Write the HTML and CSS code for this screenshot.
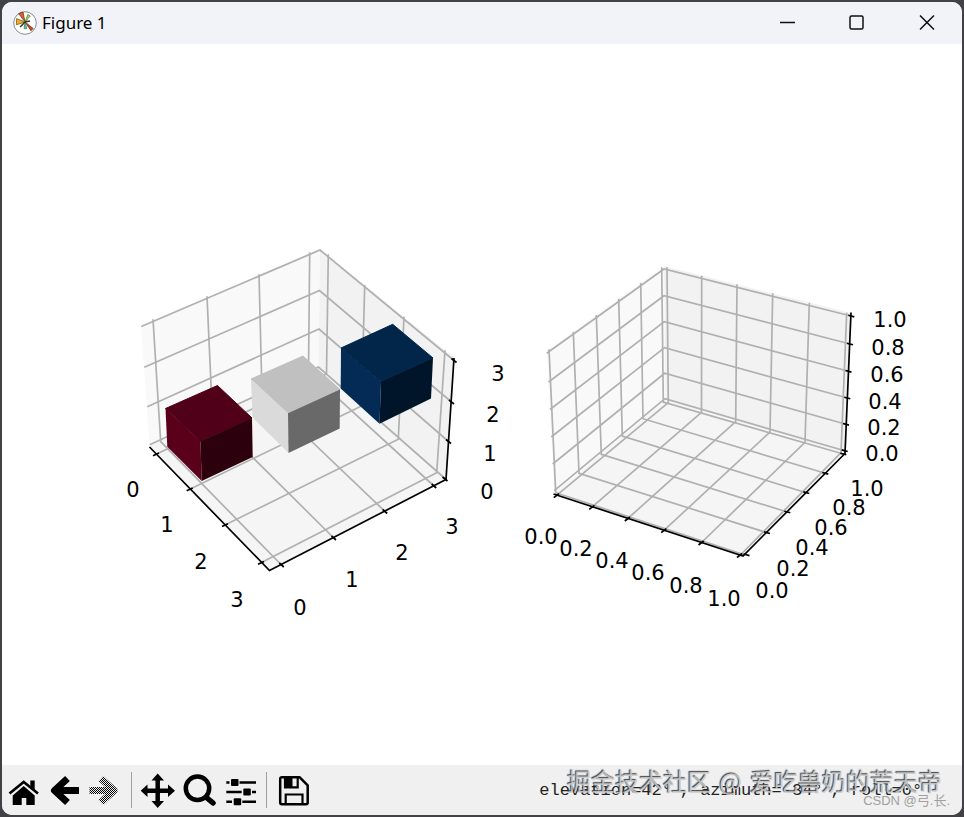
FILE: index.html
```
<!DOCTYPE html>
<html lang="en">
<head>
    <meta charset="UTF-8">
    <meta name="viewport" content="width=device-width, initial-scale=1.0">
    <title>Figure 1</title>
    <link rel="stylesheet" href="styles.css">
</head>
<body>
    <div class="window">
        <header class="titlebar">
            <svg class="app-icon" viewBox="0 0 24 24" aria-hidden="true">
                <circle cx="12" cy="12" r="11.3" fill="#fff" stroke="#8a8a92" stroke-width="1"/>
                <path d="M12 11L5.600 2.600 10 1z" fill="#e0602a" stroke="#5a3014" stroke-width=".7"/>
                <path d="M12 11L3.400 13.800 3.600 7.600z" fill="#f0b020" stroke="#6a4a10" stroke-width=".7"/>
                <path d="M12 11L14.800 3.600 17.200 5z" fill="#a8d860" stroke="#4a7030" stroke-width=".7"/>
                <path d="M12 11L20.200 17.500 18 19.700z" fill="#d8481c" stroke="#5a2010" stroke-width=".7"/>
                <path d="M12 11L13.800 17.500 11 17.700z" fill="#50c8a0" stroke="#308060" stroke-width=".7"/>
                <path d="M12 11L7.200 16M12 11L17 10" stroke="#403020" stroke-width="1.500"/>
            </svg>
            <h1 class="title">Figure 1</h1>
            <div class="window-controls">
                <button aria-label="Minimize"><svg viewBox="0 0 16 16"><path d="M1 7.500H16"/></svg></button>
                <button aria-label="Maximize"><svg viewBox="0 0 16 16"><rect x="1" y="1" width="13" height="13" rx="1.500"/></svg></button>
                <button aria-label="Close"><svg viewBox="0 0 16 16"><path d="M1 .5L15 14.500M15 .5L1 14.500"/></svg></button>
            </div>
        </header>

        <main class="figure">
            <svg class="plots" viewBox="2 44 960 721" role="img" aria-label="Two 3D axes, the first with three voxels">
                <!-- left axes -->
                <g class="axes">
                    <path class="pane-x" d="M141 325L320 249 318.500 367 149.500 446z"/>
                    <path class="pane-y" d="M320 249L454 357.500 445.500 480 318.500 367z"/>
                    <path class="pane-z" d="M149.500 446L318.500 367 445.500 480 269.500 570.500z"/>
                    <g class="grid">
                        <path d="M153 319.300L160.700 441.700 281.500 565"/>
                        <path d="M207 296.300L212.500 417.500 333.800 538"/>
                        <path d="M259 274.300L262 394 385 511.500"/>
                        <path d="M309.700 252.300L308.500 371.500 434 486"/>
                        <path d="M328.300 254.300L326.500 374 156 454.300"/>
                        <path d="M364.700 285L361.500 406 189.700 489.300"/>
                        <path d="M404 316.700L398.300 439.300 225 525"/>
                        <path d="M445 350.300L436.700 472.700 261 562.700"/>
                        <path d="M141.300 326.500L320 250 454 360.500"/>
                        <path d="M144.300 367.300L319.500 290.500 451.500 402"/>
                        <path d="M147.300 406.700L319 329 448.500 441.500"/>
                        <path d="M149.700 444.700L318.500 367 445.500 479"/>
                    </g>
                    <g class="axis">
                        <path d="M149.500 447L269.500 570.500 446 479.500 454 358"/>
                        <path d="M153 455.800L159 453M186.700 490.800L192.700 488M222 526.500L228 523.700M258 564.200L264 561.400"/>
                        <path d="M279.300 563L283.800 567M331.500 536L336 540M382.700 509.500L387.200 513.500M431.700 484L436.200 488"/>
                        <path d="M451.500 358.500L456.500 362.500M449 400L454 404M446 439.500L451 443.500M442.500 477L447.500 481"/>
                    </g>
                    <g class="voxel-red">
                        <path class="top" d="M165.500 408.500L217.500 385.500 252 418 200.500 441.500z"/>
                        <path class="side" d="M165.500 408.500L200.500 441.500 201.700 481 167.300 446.700z"/>
                        <path class="front" d="M200.500 441.500L252 418 252.700 457 201.700 481z"/>
                    </g>
                    <g class="voxel-gray">
                        <path class="top" d="M251 379L303 356 340 389.500 288 413.300z"/>
                        <path class="side" d="M251 379L288 413.300 288.500 453 252.500 417.500z"/>
                        <path class="front" d="M288 413.300L340 389.500 339.700 428.500 288.500 453z"/>
                    </g>
                    <g class="voxel-blue">
                        <path class="top" d="M341 348L392.700 324.300 433 358 381 381.500z"/>
                        <path class="side" d="M341 348L381 381.500 379.500 423.700 340.700 388.500z"/>
                        <path class="front" d="M381 381.500L433 358 431 398.500 379.500 423.700z"/>
                    </g>
                    <g class="ticks">
                        <text x="133" y="497">0</text>
                        <text x="167" y="532">1</text>
                        <text x="201" y="569">2</text>
                        <text x="237" y="607">3</text>
                        <text x="300" y="615">0</text>
                        <text x="352" y="587">1</text>
                        <text x="402" y="560">2</text>
                        <text x="452" y="534">3</text>
                        <text x="487" y="499">0</text>
                        <text x="490" y="461">1</text>
                        <text x="493" y="422">2</text>
                        <text x="498" y="381">3</text>
                    </g>
                </g>

                <!-- right axes -->
                <g class="axes">
                    <path class="pane-x" d="M547 350.500L664 266 665.500 400.500 554 493.500z"/>
                    <path class="pane-y" d="M664 266L851 313 845 453.500 665.500 400.500z"/>
                    <path class="pane-z" d="M554 493.500L665.500 400.500 845 453.500 743 556z"/>
                    <g class="grid">
                        <path d="M549 349.300L555.700 492.700 745 555"/>
                        <path d="M573.300 332L579 473.300 767 532.700"/>
                        <path d="M596.300 315L601.300 454.300 787.300 512"/>
                        <path d="M618.700 298.700L622.300 436 806.300 492.700"/>
                        <path d="M640.700 283L643 418.700 825.300 473.300"/>
                        <path d="M661.700 267.300L663.300 402 843.300 454"/>
                        <path d="M667 267.300L668.300 402.700 556.300 495.700"/>
                        <path d="M701.700 275.700L701.500 412.300 591.700 507.300"/>
                        <path d="M737 284.300L735.700 421.700 627.300 519"/>
                        <path d="M772.700 293.300L770 432 663.700 530.700"/>
                        <path d="M809.300 302.700L805 442.300 701 543"/>
                        <path d="M846.700 312.700L841 452.700 740 555.500"/>
                        <path d="M546.700 353.300L664 269 851 316"/>
                        <path d="M548.500 382L664 295.700 850 344"/>
                        <path d="M550 409.500L664.300 321.700 848.500 371.300"/>
                        <path d="M551.200 437L664.500 347.700 847.300 398"/>
                        <path d="M552.700 464L664.700 373.300 846 424.300"/>
                        <path d="M554.300 490.700L665 398.700 844.700 450.700"/>
                    </g>
                    <g class="axis">
                        <path d="M553.500 494L743 556 845 453.500 851 312.500"/>
                        <path d="M553.800 497.700L559 493.700M589.200 509.300L594.400 505.300M624.800 521L630 517M661.200 532.700L666.400 528.700M698.500 545L703.700 541M737 557.500L742.200 553.500"/>
                        <path d="M743.500 554L749.500 555.600M764 531.900L770 533.500M784.300 511.200L790.300 512.800M803.300 491.900L809.300 493.500M822.300 472.500L828.300 474.100M840.300 453.200L846.300 454.800"/>
                        <path d="M848.300 315.300L854.300 316.900M847 343.200L853 344.800M845.500 370.500L851.500 372.100M844.300 397.200L850.300 398.800M843 423.500L849 425.100M841.700 449.900L847.700 451.500"/>
                    </g>
                    <g class="ticks">
                        <text x="541" y="544">0.0</text>
                        <text x="576" y="556">0.2</text>
                        <text x="612" y="568">0.4</text>
                        <text x="648" y="580">0.6</text>
                        <text x="686" y="593">0.8</text>
                        <text x="724" y="606">1.0</text>
                        <text x="772" y="598">0.0</text>
                        <text x="793" y="576">0.2</text>
                        <text x="812" y="555">0.4</text>
                        <text x="831" y="535">0.6</text>
                        <text x="849" y="515">0.8</text>
                        <text x="867" y="496">1.0</text>
                        <text x="882" y="461">0.0</text>
                        <text x="884" y="435">0.2</text>
                        <text x="885" y="409">0.4</text>
                        <text x="887" y="382">0.6</text>
                        <text x="888" y="355">0.8</text>
                        <text x="890" y="327">1.0</text>
                    </g>
                </g>
            </svg>
        </main>

        <footer class="toolbar">
            <button class="tool" aria-label="Home">
                <svg viewBox="0 0 40 40">
                    <path d="M26.300 10.500H30.700V20L26.300 16z"/>
                    <path d="M8.700 25.500L19.700 16 30.700 25.500V35H22.300V28H17.700V35H8.700z"/>
                    <path class="line" stroke-width="2.600" d="M5.500 23.500L19.700 12 34 23.500"/>
                </svg>
            </button>
            <button class="tool" aria-label="Back">
                <svg viewBox="0 0 40 40">
                    <path class="line" stroke-width="7" stroke-linejoin="round" d="M23.500 8.500L10.500 20.500 23.500 32.500M11 20.500H35"/>
                </svg>
            </button>
            <button class="tool" aria-label="Forward" disabled>
                <svg viewBox="0 0 40 40">
                    <defs>
                        <pattern id="dither" width="2" height="2" patternUnits="userSpaceOnUse">
                            <path d="M0 0H1V1H0zM1 1H2V2H1z"/>
                        </pattern>
                    </defs>
                    <path fill="none" stroke="url(#dither)" stroke-width="7" stroke-linejoin="round" d="M17 8.500L30 20.500 17 32.500M5.500 20.500H29"/>
                </svg>
            </button>
            <span class="separator"></span>
            <button class="tool" aria-label="Pan">
                <svg viewBox="0 0 40 40">
                    <path class="line" stroke-width="4.500" d="M18.700 8V33M6 20.700H31.500"/>
                    <path d="M18.700 3.500L25 10.500H12.500zM18.700 38L12.500 31H25zM1.700 20.700L8.500 14.500V27zM36 20.700L29 14.500V27z"/>
                </svg>
            </button>
            <button class="tool" aria-label="Zoom">
                <svg viewBox="0 0 40 40">
                    <circle class="line" cx="18.500" cy="18.300" r="11.700" stroke-width="4.500"/>
                    <path class="line" stroke-width="5.500" stroke-linecap="round" d="M27.500 27.500L34 33"/>
                </svg>
            </button>
            <button class="tool" aria-label="Configure subplots">
                <svg viewBox="0 0 40 40">
                    <path class="line" stroke-width="2.600" d="M7.300 12.500H10.500M20.500 12.500H37M7.300 22H22.700M33 22H37M7.300 31.700H13M23.300 31.700H37"/>
                    <rect x="12" y="9" width="7.500" height="7" rx="1"/>
                    <rect x="24.300" y="18.500" width="7.500" height="7" rx="1"/>
                    <rect x="14.700" y="28.200" width="7.500" height="7" rx="1"/>
                </svg>
            </button>
            <span class="separator"></span>
            <button class="tool" aria-label="Save">
                <svg viewBox="0 0 40 40">
                    <path class="line" stroke-width="2.500" stroke-linejoin="round" d="M8 7.200H25.500L33.700 15.400V32.500Q33.700 34.200 32 34.200H8Q6.200 34.200 6.200 32.500V9Q6.200 7.200 8 7.200z"/>
                    <path class="line" stroke-width="2.200" d="M11 8V17.300H23.700V8M11.700 34V24.500H28.500V34"/>
                    <path d="M11.500 8H18.500V17.500H11.500z"/>
                </svg>
            </button>
            <output class="status">elevation=42<span class="degree">°</span>, azimuth=-34<span class="degree">°</span>, roll=0<span class="degree">°</span></output>
            <div class="watermark">掘金技术社区<span class="at">@</span>爱吃兽奶的荒天帝</div>
            <div class="credit">CSDN @弓.长.</div>
        </footer>
    </div>
</body>
</html>
```
FILE: styles.css
```
:root {
    --desktop: #424145;
    --titlebar: #f1f3f9;
    --toolbar: #f0f0f0;
    --grid: #b0b0b0;
}

* {
    box-sizing: border-box;
}

body {
    margin: 0;
    padding: 2px;
    min-height: 100vh;
    display: flex;
    background-color: var(--desktop);
    color: #000;
}

button {
    display: flex;
    align-items: center;
    justify-content: center;
    padding: 0;
    border: none;
    background: none;
}

.window {
    flex: 1;
    min-width: 0;
    display: flex;
    flex-direction: column;
    background-color: #fff;
    border-radius: 10px;
    overflow: hidden;
}

/* title bar */
.titlebar {
    display: flex;
    align-items: center;
    height: 42px;
    padding-left: 11px;
    gap: 5px;
    background-color: var(--titlebar);
}

.app-icon {
    width: 24px;
    height: 24px;
}

.title {
    flex: 1;
    margin: 0;
    padding-bottom: 2px;
    font-family: "Noto Sans", "Open Sans", sans-serif;
    font-size: 17px;
    font-weight: normal;
}

.window-controls {
    display: flex;
    align-self: stretch;
}

.window-controls button {
    width: 70px;
}

.window-controls svg {
    width: 16px;
    height: 16px;
    fill: none;
    stroke: #111;
    stroke-width: 1.5;
}

/* figure */
.figure {
    flex: 1;
    min-height: 0;
    display: flex;
}

.plots {
    width: 100%;
    height: auto;
}

.pane-x {
    fill: #f9f9f9;
}

.pane-y {
    fill: #f2f2f2;
}

.pane-z {
    fill: #f5f5f5;
}

.grid,
.axis {
    fill: none;
    stroke: var(--grid);
    stroke-width: 1.7;
}

.axis {
    stroke: #000;
}

.ticks {
    font-family: "DejaVu Sans", sans-serif;
    font-size: 21px;
    text-anchor: middle;
}

.voxel-red .top {
    fill: #500018;
    stroke: #500018;
}

.voxel-red .side {
    fill: #5b001b;
}

.voxel-red .front {
    fill: #2c000d;
}

.voxel-gray .top {
    fill: #c0c0c0;
    stroke: #c0c0c0;
}

.voxel-gray .side {
    fill: #dadada;
}

.voxel-gray .front {
    fill: #696969;
}

.voxel-blue .top {
    fill: #02264a;
    stroke: #02264a;
}

.voxel-blue .side {
    fill: #032b55;
}

.voxel-blue .front {
    fill: #001529;
}

/* toolbar */
.toolbar {
    position: relative;
    display: flex;
    align-items: center;
    height: 50px;
    padding: 0 32px 0 2px;
    background-color: var(--toolbar);
}

.tool svg {
    display: block;
    width: 40px;
    height: 40px;
}

.tool .line {
    fill: none;
    stroke: #000;
}

.separator {
    width: 1px;
    height: 36px;
    margin: 0 7px;
    background-color: #a0a0a0;
}

.status {
    margin-left: auto;
    font-family: "Liberation Mono", monospace;
    font-size: 17px;
    color: #222;
    white-space: nowrap;
}

.degree {
    display: inline-block;
    width: 18px;
}

/* embossed text over the status line */
.watermark {
    position: absolute;
    right: 20px;
    top: 0;
    font-family: "Noto Sans CJK SC", sans-serif;
    font-size: 24px;
    line-height: 32px;
    color: rgba(205, 205, 205, 0.85);
    text-shadow: -1px -1px 1px #444;
    white-space: nowrap;
}

.at {
    margin: 0 8px;
}

.credit {
    position: absolute;
    right: 12px;
    bottom: 6px;
    font-family: "Liberation Sans", "Noto Sans CJK SC", sans-serif;
    font-size: 13px;
    line-height: 16px;
    color: #a0a0a0;
    white-space: nowrap;
}
```
